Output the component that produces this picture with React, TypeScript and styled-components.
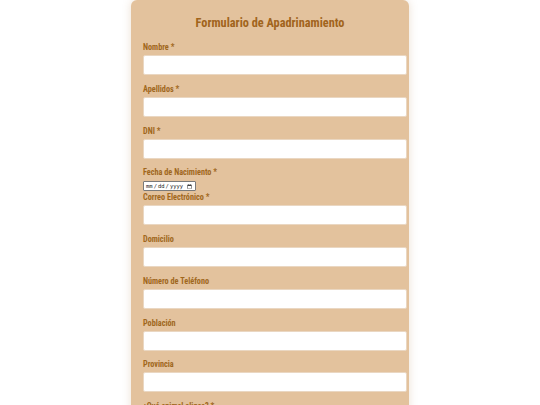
import styled, { createGlobalStyle } from 'styled-components';

const GlobalStyle = createGlobalStyle`
  body {
    margin: 0;
    background: #ffffff;
    font-family: "Roboto Condensed", "Liberation Sans", Arial, sans-serif;
  }
`;

const Page = styled.div`
  display: flex;
  justify-content: center;
`;

const FormCard = styled.form`
  width: 254px;
  padding: 15px 12px 20px;
  background: #e3c29d;
  border-radius: 6px;
  box-shadow: 0 0 8px rgba(180, 130, 80, 0.25);
`;

const Title = styled.h2`
  margin: 0 0 11px;
  font-size: 12.3px;
  line-height: 16px;
  font-weight: bold;
  text-align: center;
  color: #a1641c;
`;

const Field = styled.div`
  display: flex;
  flex-direction: column;
  align-items: flex-start;
`;

const Label = styled.label`
  font-size: 8.2px;
  line-height: 9px;
  font-weight: bold;
  color: #a0671c;
  margin: 1px 0 3px;
`;

const TextInput = styled.input`
  box-sizing: border-box;
  width: 264px;
  height: 20px;
  margin: 0 0 8.75px;
  padding: 2px 5px;
  border: 1px solid #ead7c2;
  border-radius: 2px;
  background: #ffffff;
  font-size: 8px;
  outline: none;
`;

const DateInput = styled.input`
  box-sizing: border-box;
  width: 53px;
  height: 10px;
  margin: 1px 0 1px;
  padding: 0 1px;
  border: 1px solid #7a7a7a;
  border-radius: 1px;
  background: #ffffff;
  font-family: "DejaVu Sans Mono", monospace;
  font-size: 5.5px;
  color: #222;
`;

const fields = [
  { label: 'Nombre *' },
  { label: 'Apellidos *' },
  { label: 'DNI *' },
  { label: 'Fecha de Nacimiento *', date: true },
  { label: 'Correo Electrónico *' },
  { label: 'Domicilio' },
  { label: 'Número de Teléfono' },
  { label: 'Población' },
  { label: 'Provincia' },
  { label: '¿Qué animal eliges? *' },
];

const App = () => {
  return (
    <Page>
      <GlobalStyle />
      <FormCard>
        <Title>Formulario de Apadrinamiento</Title>
        {fields.map((f) => (
          <Field key={f.label}>
            <Label>{f.label}</Label>
            {f.date ? <DateInput type="date" /> : <TextInput type="text" />}
          </Field>
        ))}
      </FormCard>
    </Page>
  );
};

export default App;
